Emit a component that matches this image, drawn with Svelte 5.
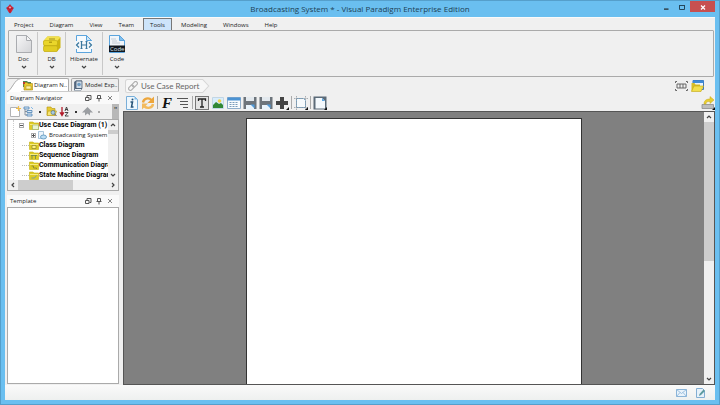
<script>
  const menus = ["Project", "Diagram", "View", "Team", "Tools", "Modeling", "Windows", "Help"];
  const diagrams = ["Class Diagram", "Sequence Diagram", "Communication Diagram", "State Machine Diagram"];

  let activeMenu = "Tools";
</script>

{#snippet chevron(dir)}
  <svg class="chevron {dir}" viewBox="0 0 6 6" width="6" height="6">
    <path d="M1 2l2 2 2-2" fill="none" stroke="#444" stroke-width="1.2" />
  </svg>
{/snippet}

{#snippet panelHead(title)}
  <header class="panel-head">
    <h2>{title}</h2>
    <button type="button" aria-label="Restore {title}">
      <svg viewBox="0 0 8 8" width="8" height="8" fill="none" stroke="#555">
        <path d="M3 3V1.500h4v4H5.500M1.500 3.500h3.500v3H1.500z" />
      </svg>
    </button>
    <button type="button" aria-label="Pin {title}">
      <svg viewBox="0 0 8 8" width="8" height="8" fill="none" stroke="#555">
        <path d="M2.500 4.500v-3h3v3M1.500 4.500h5M4 5v2.500" />
      </svg>
    </button>
    <button type="button" aria-label="Close {title}">
      <svg viewBox="0 0 8 8" width="8" height="8" fill="none" stroke="#666" stroke-width=".8">
        <path d="M2 2l4 4M6 2L2 6" />
      </svg>
    </button>
  </header>
{/snippet}

{#snippet folder(mark)}
  <svg viewBox="0 0 10 9" width="10" height="9">
    <path d="M.5 1h3.500l1 1h4.500v6.500H.5z" fill="#ddcb25" stroke="#c5b013" stroke-width=".6" />
    <path d="M1 3h8v1H1z" fill="#f5eb83" />
    {#if mark === 0}
      <path d="M3 4.500h4v3H3z" fill="#fff27c" stroke="#8a8232" stroke-width=".7" />
    {:else if mark === 1}
      <path d="M3 4v4M6.500 4v4M2 4.500h6" stroke="#6d8350" fill="none" stroke-width=".8" />
    {:else if mark === 2}
      <path d="M2.500 5h2v2h3v1" stroke="#847d35" fill="none" stroke-width=".8" />
    {:else if mark === 3}
      <path d="M2.500 7h3l2-2.500" stroke="#729bb0" fill="none" stroke-width=".9" />
    {:else}
      <path d="M3.500 4h6v4.500h-6z" fill="#e8f3d0" stroke="#94a966" stroke-width=".6" />
    {/if}
  </svg>
{/snippet}

{#snippet breakIcon()}
  <svg viewBox="0 0 14 14" width="14" height="14">
    <path d="M.5 1h2.500v4h8V1h2.500v6H.5zM.5 13V7h13v6H11v-2L8.500 9H3v4z" fill="#6d747b" />
    <path d="M3 1h8v4H3z" fill="#e3e9ee" />
    <path d="M3 9h5l3 3v1.500H3z" fill="#e9f3fb" />
    <path d="M7.500 8.500l4 4v-4z" fill="#4f9bdd" />
  </svg>
{/snippet}

<div class="window">
  <header class="titlebar">
    <svg class="logo" viewBox="0 0 8 10" width="8" height="10">
      <path d="M4 .5L7.700 4 5.500 8 4 9.500 2.500 8 .3 4z" fill="#d72638" />
      <path d="M4 .5v3M.5 4L4 5l3.500-1M4 5v4" stroke="#8f1f35" stroke-width=".7" fill="none" />
      <circle cx="4" cy="3.500" r="1" fill="#f2a7ac" />
    </svg>
    <h1>Broadcasting System * - Visual Paradigm Enterprise Edition</h1>
    <div class="window-buttons">
      <button type="button" aria-label="Minimize">
        <svg viewBox="0 0 8 8" width="8" height="8"><path d="M2 5.500h4.500v1.200H2z" fill="#222" /></svg>
      </button>
      <button type="button" aria-label="Maximize">
        <svg viewBox="0 0 8 8" width="8" height="8"><path d="M1.500 2.500h5v4h-5zM1 2.500h6" fill="none" stroke="#24475c" /></svg>
      </button>
      <button type="button" class="close" aria-label="Close">
        <svg viewBox="0 0 8 8" width="8" height="8"><path d="M2 2.500l4 4M6 2.500l-4 4" stroke="#fff" stroke-width="1.200" /></svg>
      </button>
    </div>
  </header>

  <div class="client">
    <nav class="menu">
      {#each menus as menu}
        <button type="button" class:active={menu === activeMenu} on:click={() => (activeMenu = menu)}>{menu}</button>
      {/each}
    </nav>

    <div class="ribbon">
      <button type="button">
        <svg viewBox="0 0 18 18" width="18" height="18">
          <defs>
            <linearGradient id="paper" x2="1" y2="1">
              <stop offset="0" stop-color="#f7f7f8" />
              <stop offset="1" stop-color="#d3d4d7" />
            </linearGradient>
          </defs>
          <path d="M1.500.5h10l5 5v12h-15z" fill="url(#paper)" stroke="#aaacb0" />
          <path d="M11.500.5v5h5z" fill="#f4f4f5" stroke="#aaacb0" />
        </svg>
        <span>Doc</span>
        {@render chevron("down")}
      </button>
      <button type="button">
        <svg viewBox="0 0 18 18" width="18" height="18">
          <path d="M.5 6L4.500 1.500h11.500l1.500 1v10L14 16.500H1z" fill="#cdb50f" />
          <path d="M4.500 1.500h11.500l1.500 1L14 6H.5z" fill="#f3e14d" />
          <path d="M6 4h6" stroke="#867a14" stroke-width=".8" />
          <rect x=".5" y="5.500" width="14" height="5" rx="1.500" fill="#ead62a" stroke="#c0aa14" stroke-width=".6" />
          <rect x=".5" y="10.800" width="14" height="5.700" rx="1.500" fill="#e2cd22" stroke="#c0aa14" stroke-width=".6" />
          <path d="M6 7.200h3" stroke="#9b8706" />
        </svg>
        <span>DB</span>
        {@render chevron("down")}
      </button>
      <button type="button" class="wide">
        <svg viewBox="0 0 18 18" width="18" height="18">
          <path d="M1.500.5h10l5 5v12h-15z" fill="#f5fafe" stroke="#5ba4dd" />
          <path d="M11.500.5v5h5z" fill="#cfe7f8" stroke="#5ba4dd" />
          <path d="M0 6h18v8H0z" fill="#f3f7fa" />
          <path d="M4 7.500L1.500 10 4 12.500M14 7.500l2.500 2.500-2.500 2.500M6.500 6.500v7M11.500 6.500v7M5.500 6.500h2M10.500 6.500h2M5.500 13.500h2M10.500 13.500h2M6.500 10h5" fill="none" stroke="#39769d" stroke-width="1.200" />
        </svg>
        <span>Hibernate</span>
        {@render chevron("down")}
      </button>
      <button type="button">
        <svg viewBox="0 0 18 18" width="18" height="18">
          <path d="M1.500.5h10l5 5v12h-15z" fill="#f0f5fa" stroke="#5ba4dd" />
          <path d="M11.500.5v5h5z" fill="#80c0ef" stroke="#5ba4dd" />
          <path d="M3 4h5M4 6h5M4 8h8" stroke="#b7c2cc" stroke-width=".8" />
          <path d="M1 10.500h16V17H1z" fill="#111820" />
          <text x="2" y="16" font-size="6" fill="#dce3e8">Code</text>
        </svg>
        <span>Code</span>
        {@render chevron("down")}
      </button>
    </div>

    <div class="body">
      <aside>
        <div class="side-tabs">
          <button type="button" class="side-tab slanted">
            <svg viewBox="0 0 14 14" width="14" height="14">
              <path d="M0 14C5 13 7 1 14 .5V14z" fill="#fff" />
              <path d="M0 13.500C5 12.500 7 1 14 .5" fill="none" stroke="#aaa" />
            </svg>
            <svg viewBox="0 0 11 11" width="11" height="11">
              <path d="M1 1h4l1 1h3v5H1z" fill="#4d8457" />
              <path d="M2 2.500h3l1 1h4.500V10H2z" fill="#e8ca2e" stroke="#a98710" stroke-width=".6" />
              <path d="M1 2h2v2H1z" fill="#c23a2e" />
              <path d="M4 6h5v3H4z" fill="#fff3a2" stroke="#9a8423" stroke-width=".5" />
            </svg>
            <span>Diagram N..</span>
          </button>
          <button type="button" class="side-tab">
            <svg viewBox="0 0 11 11" width="11" height="11">
              <path d="M1 2l2-1.500h6V9L8 10.500H1z" fill="#65768a" />
              <path d="M3 1h6v7.500H3z" fill="#cfdbe7" stroke="#33485f" stroke-width=".7" />
              <circle cx="6" cy="4.500" r="1.800" fill="#6d9cc4" />
              <path d="M2 9.500h6" stroke="#f0f3f6" />
            </svg>
            <span>Model Exp..</span>
          </button>
        </div>

        {@render panelHead("Diagram Navigator")}
        <div class="nav-tools">
          <button type="button" aria-label="New diagram">
            <svg viewBox="0 0 11 11" width="11" height="11">
              <path d="M.5 1.500h7l2 2v7h-9z" fill="#fff" stroke="#b2b3b5" />
              <path d="M8.500 0v5M6 2.500h5" stroke="#f1bd48" stroke-width="1.200" />
            </svg>
          </button>
          <button type="button" aria-label="Tree options">
            <svg viewBox="0 0 11 11" width="11" height="11">
              <path d="M1 1h5v2H1zM4 4.500h5v2H4zM4 8h5v2H4z" fill="#d8eafa" stroke="#4c81b2" stroke-width=".8" />
              <path d="M2 3v6h2M2 5.500h2" fill="none" stroke="#6f7f8f" stroke-width=".8" />
              <path d="M8 1l2 2" stroke="#83b8e7" />
            </svg>
          </button>
          <i class="dot"></i>
          <button type="button" aria-label="Open folder">
            <svg viewBox="0 0 11 11" width="11" height="11">
              <path d="M1 1h4l1 1.500h3V9H1z" fill="#e6ca35" stroke="#b6960c" stroke-width=".6" />
              <path d="M2 5h8.500L9 9.500H1z" fill="#f6e574" stroke="#b6960c" stroke-width=".6" />
              <circle cx="7" cy="6.500" r="2" fill="#a6cbe5" stroke="#557589" stroke-width=".7" />
              <path d="M8.500 8l2 2" stroke="#555" />
            </svg>
          </button>
          <button type="button" aria-label="Sort">
            <svg viewBox="0 0 11 11" width="11" height="11">
              <path d="M3 1v7M1.500 7L3 9.500 4.500 7z" fill="#b31d2c" stroke="#b31d2c" stroke-width="1.300" />
              <path d="M6 5l1.500-4L9 5M6.500 3.500h2M6 6.500h3L6 10h3.500" fill="none" stroke="#333" stroke-width=".9" />
            </svg>
          </button>
          <i class="dot"></i>
          <button type="button" aria-label="Move up">
            <svg viewBox="0 0 11 11" width="11" height="11"><path d="M0 6.500L5.500 1 11 6.500H8V9.500L5.500 7.500 3 9.500V6.500z" fill="#9b9ea2" /></svg>
          </button>
          <i class="dot faint"></i>
          <span class="overflow">"</span>
        </div>

        <div class="tree">
          <div class="tree-view">
            <ul>
              <li class="open">
                <i class="toggle"></i>{@render folder(4)}<b>Use Case Diagram (1)</b>
              </li>
              <li class="child">
                <i class="toggle plus"></i>
                <svg viewBox="0 0 9 9" width="9" height="9">
                  <path d="M.5.5h5v7h-5z" fill="#eef5fb" stroke="#94b7d2" stroke-width=".8" />
                  <ellipse cx="5.500" cy="6" rx="3" ry="2" fill="#bedff5" stroke="#568fb8" stroke-width=".8" />
                </svg>
                <span>Broadcasting System</span>
              </li>
              {#each diagrams as name, i}
                <li class="leaf">{@render folder(i)}<b>{name}</b></li>
              {/each}
            </ul>
            <div class="scroll vertical">
              {@render chevron("up")}
              <div class="thumb small"></div>
              <div class="rest"></div>
              {@render chevron("down")}
            </div>
          </div>
          <div class="scroll horizontal">
            {@render chevron("left")}
            <div class="thumb"></div>
            <div class="rest"></div>
            {@render chevron("right")}
          </div>
        </div>

        {@render panelHead("Template")}
        <div class="template"></div>
      </aside>

      <main>
        <div class="crumbs">
          <a class="crumb" href="#report">
            <svg class="crumb-shape" viewBox="0 0 84 14" preserveAspectRatio="none">
              <path d="M2.500.5h74l6 6.500-6 6.500h-74q-2 0-2-2v-9q0-2 2-2z" fill="#f7f7f7" stroke="#d6d6d6" />
            </svg>
            <svg viewBox="0 0 10 10" width="10" height="10">
              <g fill="none" stroke="#b0b0b0" stroke-width="1.200" transform="rotate(-45 5 5)">
                <rect x="-.5" y="3.200" width="6" height="3.600" rx="1.800" />
                <rect x="4.500" y="3.200" width="6" height="3.600" rx="1.800" />
              </g>
            </svg>
            <span>Use Case Report</span>
          </a>
          <div class="views">
            <button type="button" aria-label="Fit width">
              <svg viewBox="0 0 13 10" width="13" height="10" fill="none" stroke="#666">
                <path d="M.5 2V.5H2M11 .5h1.500V2M.5 8v1.500H2M11 9.500h1.500V8M2 3h9v4H2zM5 3v4M8 3v4" />
              </svg>
            </button>
            <button type="button" aria-label="Open window">
              <svg viewBox="0 0 13 12" width="13" height="12">
                <path d="M2 .5h10.500v9H2z" fill="#eaf4fc" stroke="#3a78bd" />
                <path d="M2 .5h10.500V3H2z" fill="#3f8bd8" />
                <path d="M.5 3h3l1 1.500H9V11H.5z" fill="#d6bd29" />
                <path d="M3 6h9.500L10 11.500H.5z" fill="#f1df4d" stroke="#c2a60f" stroke-width=".6" />
              </svg>
            </button>
          </div>
        </div>

        <div class="tools">
          <button type="button" aria-label="Info">
            <svg viewBox="0 0 14 14" width="14" height="14">
              <path d="M1.500.5h8l3 3v10h-11z" fill="#eef7fd" stroke="#79aed8" />
              <path d="M9.500.5v3h3z" fill="#7dbbea" />
              <path d="M5.500 6h2L6.500 11h2" fill="none" stroke="#245277" stroke-width="1.500" />
              <circle cx="7.500" cy="3.500" r="1" fill="#245277" />
            </svg>
          </button>
          <button type="button" aria-label="Refresh">
            <svg viewBox="0 0 14 14" width="14" height="14">
              <path d="M2 6.500C2.500 2.500 7.500 1 10.500 4" fill="none" stroke="#eda63c" stroke-width="2.400" />
              <path d="M13 .5v6.500H6.500z" fill="#eda63c" />
              <path d="M12 8c-.5 4-5.500 5-8.500 2.500" fill="none" stroke="#f3ba5c" stroke-width="2.400" />
              <path d="M1 13.500V7.500h6z" fill="#f3ba5c" />
            </svg>
          </button>
          <i class="sep"></i>
          <button type="button" class="font" aria-label="Font"><em>F</em></button>
          <button type="button" aria-label="Paragraph">
            <svg viewBox="0 0 14 14" width="14" height="14"><path d="M1 2.500h11M4 5.500h8M4 8.500h8M7 11.500h5" stroke="#555" /></svg>
          </button>
          <i class="sep"></i>
          <button type="button" aria-label="Text">
            <svg viewBox="0 0 14 14" width="14" height="14">
              <rect x=".5" y=".5" width="13" height="13" fill="#e4e4e4" stroke="#777" />
              <path d="M3.500 5V3h7v2M7 3v8M5 11h4" fill="none" stroke="#222" stroke-width="1.300" />
            </svg>
          </button>
          <button type="button" aria-label="Image">
            <svg viewBox="0 0 14 14" width="14" height="14">
              <path d="M1.500 1.500h11v11h-11z" fill="#d8edfc" stroke="#c2d6e5" />
              <circle cx="8.500" cy="5" r="1.800" fill="#f2d24c" />
              <path d="M2 12V9l3-3 3 2 2-1 2 2v3z" fill="#318734" />
            </svg>
          </button>
          <button type="button" aria-label="Table">
            <svg viewBox="0 0 14 14" width="14" height="14">
              <path d="M.5 1.500h13v11H.5z" fill="#f8fbfd" stroke="#8faecb" />
              <path d="M.5 1.500h13v3H.5z" fill="#4c93d3" />
              <path d="M2.500 6.500h9M2.500 8.500h9M2.500 10.500h9" stroke="#789bba" stroke-dasharray="2 1" />
            </svg>
          </button>
          <button type="button" aria-label="Page break">{@render breakIcon()}</button>
          <button type="button" aria-label="Section break">{@render breakIcon()}</button>
          <button type="button" aria-label="Add">
            <svg viewBox="0 0 14 14" width="14" height="14">
              <path d="M5 1h4v4h4v4H9v4H5V9H1V5h4z" fill="#444" />
              <path d="M14 11v3h-3z" fill="#111" />
            </svg>
          </button>
          <i class="sep"></i>
          <button type="button" aria-label="Page size">
            <svg viewBox="0 0 14 14" width="14" height="14">
              <path d="M2.500 2.500h7l2 2v7h-9z" fill="#f6fafc" stroke="#7fa9ca" />
              <path d="M0 2.500h14M2.500 0v14M11.500 0v14M0 11.500h14" stroke="#8a9096" stroke-width=".7" stroke-dasharray="1.500 1" />
              <path d="M14 11v3h-3z" fill="#111" />
            </svg>
          </button>
          <i class="sep"></i>
          <button type="button" aria-label="Page setup">
            <svg viewBox="0 0 14 14" width="14" height="14">
              <path d="M.5.500h13v13H.5z" fill="#5c6b78" />
              <path d="M2.500 2h6.500l3 3v7.500H2.500z" fill="#f4f9fd" />
              <path d="M9 2v3h3z" fill="#5ba6e2" />
              <path d="M14 11v3h-3z" fill="#111" />
            </svg>
          </button>
          <button type="button" class="export" aria-label="Export">
            <svg viewBox="0 0 14 14" width="14" height="14">
              <path d="M1 8.500h11.500v4H1z" fill="#bdbdbd" stroke="#8b8b8b" stroke-width=".8" />
              <path d="M3 8c0-4 3-5 6-5V.5L13 4 9 7.500V5.500C6 5.500 5 6 5 8z" fill="#e8cd2f" stroke="#c6a918" stroke-width=".5" />
              <path d="M14 11v3h-3z" fill="#111" />
            </svg>
          </button>
        </div>

        <div class="canvas">
          <div class="desk">
            <div class="page"></div>
          </div>
          <div class="scroll vertical">
            {@render chevron("up")}
            <div class="thumb"></div>
            <div class="rest"></div>
            {@render chevron("down")}
          </div>
        </div>
      </main>
    </div>

    <footer>
      <button type="button" aria-label="Messages">
        <svg viewBox="0 0 11 8" width="11" height="8">
          <path d="M.5.5h10v7H.5z" fill="#e9f3fb" stroke="#8ab4d8" />
          <path d="M.5.5l5 4 5-4M.5 7.500l3.500-4M10.500 7.500L7 3.500" fill="none" stroke="#8ab4d8" stroke-width=".8" />
        </svg>
      </button>
      <button type="button" aria-label="Notes">
        <svg viewBox="0 0 10 10" width="10" height="10">
          <path d="M.5.5h6l2 2v7h-8z" fill="#e6f1fa" stroke="#82aed3" />
          <path d="M3 8l.5-2L7.500 1.500 9 3 5 7z" fill="#5b9a9f" />
        </svg>
      </button>
    </footer>
  </div>
</div>

<style>
  :global(body) {
    margin: 0;
  }

  .window {
    box-sizing: border-box;
    height: 100vh;
    display: flex;
    flex-direction: column;
    padding: 0 4px 4px;
    border: 1px solid #559fcb;
    background: #6abff0;
    color: #222;
    font: 6px/10px "Open Sans", "Noto Sans", sans-serif;
  }

  .window * {
    box-sizing: border-box;
  }

  svg {
    display: block;
    flex: none;
  }

  h1,
  h2,
  ul {
    margin: 0;
    padding: 0;
    font: inherit;
    list-style: none;
  }

  button {
    display: flex;
    align-items: center;
    justify-content: center;
    padding: 0;
    border: none;
    background: none;
    color: inherit;
    font: inherit;
    white-space: nowrap;
  }

  /* title bar */
  .titlebar {
    display: grid;
    grid-template-columns: 1fr auto 1fr;
    align-items: center;
    height: 16px;
    flex: none;
  }

  .titlebar h1 {
    font-size: 8px;
    line-height: 16px;
    color: #1e4155;
  }

  .logo {
    margin-left: 1px;
  }

  .window-buttons {
    display: flex;
    align-self: start;
    justify-content: flex-end;
  }

  .window-buttons button {
    width: 16px;
    height: 11px;
  }

  .window-buttons .close {
    width: 25px;
    background: #c75050;
  }

  .client {
    flex: 1;
    min-height: 0;
    display: flex;
    flex-direction: column;
    border-top: 1px solid #fafafa;
    background: #f0f0f0;
  }

  /* menu and ribbon */
  .menu {
    display: flex;
    gap: 2px;
    height: 12px;
    padding-left: 2px;
    flex: none;
  }

  .menu button {
    padding: 0 6px;
    border: 1px solid transparent;
    border-bottom: none;
  }

  .menu .active {
    border-color: #777;
    background: #cde4fa;
  }

  .ribbon {
    display: flex;
    height: 47px;
    flex: none;
    margin: 0 1px 0 3px;
    border: 1px solid #aaa;
    border-radius: 1px;
    padding: 1px;
  }

  .ribbon button {
    flex-direction: column;
    justify-content: flex-start;
    width: 28px;
    padding-top: 3px;
    border-right: 1px solid #c8c8c8;
  }

  .ribbon .wide {
    width: 37px;
  }

  .ribbon button:last-child {
    border-right: none;
  }

  .ribbon span {
    margin-top: 1px;
  }

  .body {
    flex: 1;
    min-height: 0;
    display: flex;
    gap: 3px;
    padding-top: 1px;
  }

  /* left side */
  aside {
    width: 115px;
    flex: none;
    display: flex;
    flex-direction: column;
    padding: 0 1px 1px 2px;
  }

  .side-tabs {
    display: flex;
    gap: 2px;
    height: 14px;
    flex: none;
    border-bottom: 1px solid #ccc;
  }

  .side-tab {
    gap: 1px;
    padding: 0 1px;
    border: 1px solid #aaa;
    border-bottom: none;
    border-radius: 2px 2px 0 0;
    background: #eee;
  }

  .slanted {
    padding-left: 0;
    border-width: 1px 1px 0 0;
    background: linear-gradient(90deg, #f0f0f0 14px, #fff 14px);
  }

  .panel-head {
    display: flex;
    align-items: center;
    gap: 3px;
    height: 12px;
    flex: none;
    padding: 0 5px 0 3px;
    background: #fafafa;
  }

  .panel-head h2 {
    flex: 1;
  }

  .nav-tools {
    display: flex;
    align-items: center;
    gap: 2px;
    height: 15px;
    flex: none;
    padding-left: 3px;
  }

  .dot {
    width: 2px;
    height: 2px;
    margin: 0 3px;
    background: #333;
  }

  .faint {
    background: #aaa;
  }

  .overflow {
    align-self: stretch;
    width: 7px;
    margin-left: auto;
    background: #b8b8b8;
    font-size: 8px;
    text-align: center;
  }

  .tree {
    height: 72px;
    flex: none;
    display: flex;
    flex-direction: column;
    margin-bottom: 4px;
    border: 1px solid #aaa;
    background: #fff;
  }

  .tree-view {
    flex: 1;
    min-height: 0;
    display: flex;
  }

  ul {
    flex: 1;
    min-width: 0;
    overflow: hidden;
    margin-left: 5px;
    border-left: 1px dotted #ccc;
  }

  li {
    display: flex;
    align-items: center;
    height: 10px;
    padding-left: 8px;
    white-space: nowrap;
  }

  li b {
    color: #000;
    font-family: Roboto, "Open Sans", sans-serif;
    font-size: 7px;
  }

  .child {
    gap: 2px;
    padding-left: 17px;
  }

  .leaf::before {
    content: "";
    flex: none;
    width: 7px;
    border-top: 1px dotted #bbb;
  }

  .toggle {
    flex: none;
    width: 5px;
    height: 5px;
    border: 1px solid #aaa;
    background: linear-gradient(#555, #555) center / 3px 1px no-repeat;
  }

  .open .toggle {
    margin: 0 5px 0 -3px;
  }

  .plus {
    background:
      linear-gradient(#555, #555) center / 3px 1px no-repeat,
      linear-gradient(#555, #555) center / 1px 3px no-repeat;
  }

  .scroll {
    display: flex;
    align-items: center;
    flex: none;
    gap: 2px;
    background: #f0f0f0;
  }

  .vertical {
    flex-direction: column;
    width: 10px;
    padding: 2px 0;
  }

  .horizontal {
    height: 10px;
    padding: 0 2px;
  }

  .scroll .thumb,
  .scroll .rest {
    align-self: stretch;
    flex: 4;
  }

  .scroll .thumb {
    flex: 5;
    background: #cdcdcd;
  }

  .horizontal .rest {
    flex: 3;
  }

  .scroll .small {
    flex: none;
    height: 4px;
  }

  .chevron.up {
    transform: rotate(180deg);
  }

  .chevron.left {
    transform: rotate(90deg);
  }

  .chevron.right {
    transform: rotate(-90deg);
  }

  .template {
    flex: 1;
    border: 1px solid #aaa;
    background: #fff;
  }

  /* editor */
  main {
    flex: 1;
    min-width: 0;
    display: flex;
    flex-direction: column;
  }

  .crumbs {
    display: flex;
    align-items: center;
    justify-content: space-between;
    height: 16px;
    flex: none;
    padding: 0 11px 0 2px;
  }

  .crumb {
    position: relative;
    display: flex;
    align-items: center;
    gap: 3px;
    height: 14px;
    padding: 0 11px 0 3px;
    color: #666;
    font-family: Lato, "Open Sans", sans-serif;
    font-size: 8px;
    text-decoration: none;
  }

  .crumb-shape {
    position: absolute;
    inset: 0;
    width: 100%;
    height: 100%;
  }

  .crumb span,
  .crumb svg:not(.crumb-shape) {
    position: relative;
  }

  .views {
    display: flex;
    gap: 3px;
  }

  .tools {
    display: flex;
    align-items: center;
    gap: 2px;
    height: 17px;
    flex: none;
    padding-left: 2px;
  }

  .sep {
    width: 1px;
    height: 13px;
    background: #aaa;
  }

  .font {
    width: 14px;
    color: #111;
    font: bold 15px/14px "Liberation Serif", serif;
  }

  .export {
    margin-left: auto;
  }

  .canvas {
    flex: 1;
    min-height: 0;
    display: flex;
    border: 1px solid #555;
  }

  .desk {
    flex: 1;
    display: flex;
    justify-content: center;
    padding-top: 6px;
    background: #808080;
  }

  .page {
    width: 336px;
    border: 1px solid #333;
    border-bottom: none;
    background: #fff;
  }

  footer {
    display: flex;
    align-items: center;
    justify-content: flex-end;
    gap: 9px;
    height: 15px;
    flex: none;
    padding-right: 9px;
    background: linear-gradient(#fafafa, #eef0ef);
  }
</style>
